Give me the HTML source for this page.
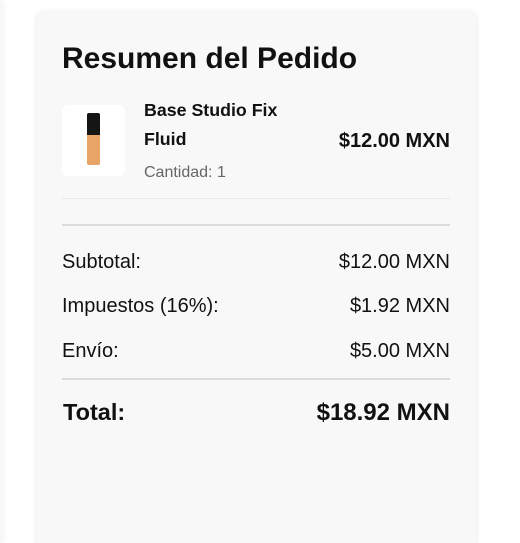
<!DOCTYPE html>
<html><head><style>
html,body{margin:0;width:520px;height:543px;overflow:hidden}
body{background:#fff;font-family:"Liberation Sans",Arial,sans-serif;position:relative}
.left{position:absolute;left:-20px;top:0;width:22px;height:543px;background:#f8f8f8;box-shadow:0 0 8px rgba(0,0,0,.08)}
.card{position:absolute;left:37px;top:11px;width:439px;height:532px;background:#f8f8f8;border-radius:8px 8px 0 0;box-shadow:0 1px 6px rgba(0,0,0,.1)}
h1{position:absolute;left:25px;top:31px;margin:0;font-size:30px;font-weight:bold;color:#111}
.img{position:absolute;left:25px;top:94px;width:63px;height:71px;background:#fff;border-radius:6px}
.cap{position:absolute;left:25px;top:8px;width:13px;height:22px;background:#151515;border-radius:2px 2px 0 0}
.body{position:absolute;left:25px;top:30px;width:13px;height:30px;background:#e9a567;border-radius:0 0 2px 2px}
.t{position:absolute;color:#111;white-space:nowrap}
.hr1{position:absolute;left:25px;top:187px;width:388px;height:1px;background:#e9e9e9}
.hr2{position:absolute;left:25px;top:213px;width:388px;height:2px;background:#dcdcdc}
.hr3{position:absolute;left:25px;top:367px;width:388px;height:2px;background:#dcdcdc}
.r{right:26px;text-align:right}
.row{font-size:20px}
</style></head><body>
<div class="left"></div>
<div class="card">
<h1>Resumen del Pedido</h1>
<div class="img"><div class="cap"></div><div class="body"></div></div>
<div class="t" style="left:107px;top:85px;font-size:17.8px;font-weight:bold;line-height:29px">Base Studio Fix<br>Fluid</div>
<div class="t" style="left:107px;top:153px;font-size:16px;color:#666">Cantidad: 1</div>
<div class="t r" style="top:119px;font-size:20px;font-weight:bold">$12.00 MXN</div>
<div class="hr1"></div><div class="hr2"></div>
<div class="t row" style="left:25px;top:240px">Subtotal:</div><div class="t row r" style="top:240px">$12.00 MXN</div>
<div class="t row" style="left:25px;top:284px">Impuestos (16%):</div><div class="t row r" style="top:284px">$1.92 MXN</div>
<div class="t row" style="left:25px;top:329px">Envío:</div><div class="t row r" style="top:329px">$5.00 MXN</div>
<div class="hr3"></div>
<div class="t" style="left:26px;top:388px;font-size:23.5px;font-weight:bold">Total:</div>
<div class="t r" style="top:388px;font-size:24px;font-weight:bold">$18.92 MXN</div>
</div>
</body></html>
